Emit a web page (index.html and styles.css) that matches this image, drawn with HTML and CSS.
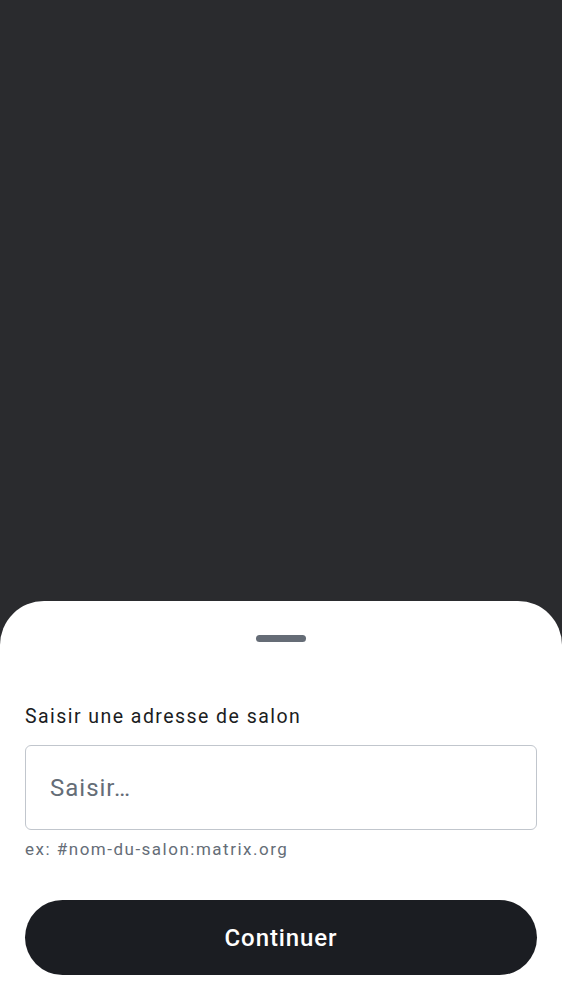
FILE: index.html
```html
<!DOCTYPE html>
<html lang="fr">
<head>
<meta charset="utf-8">
<link rel="stylesheet" href="styles.css">
</head>
<body>
<div class="screen">
  <div class="scrim"></div>
  <div class="sheet">
    <div class="handle"></div>
    <label class="label" for="addr">Saisir une adresse de salon</label>
    <div class="field"><input id="addr" class="input" type="text" placeholder="Saisir…"></div>
    <div class="helper">ex: #nom-du-salon:matrix.org</div>
    <button class="btn" type="button">Continuer</button>
  </div>
</div>
</body>
</html>
```
FILE: styles.css
```css
html, body {
  margin: 0;
  padding: 0;
  background: #2a2b2e;
}
.screen {
  height: 1000px;
  display: flex;
  flex-direction: column;
  font-family: Roboto, "Noto Sans", sans-serif;
}
.scrim {
  flex: 1;
  background: #2a2b2e;
}
.sheet {
  height: 399px;
  box-sizing: border-box;
  background: #ffffff;
  border-radius: 44px 44px 0 0;
  padding: 34px 25px 0;
  display: flex;
  flex-direction: column;
}
.handle {
  align-self: center;
  width: 50px;
  height: 7px;
  border-radius: 4px;
  background: #656c76;
}
.label {
  margin-top: 63px;
  font-size: 19.5px;
  line-height: 24px;
  letter-spacing: 1.45px;
  color: #1b1d22;
}
.field {
  margin-top: 16px;
  height: 85px;
  box-sizing: border-box;
  border: 1.5px solid #c1c6cd;
  border-radius: 6px;
  display: flex;
  align-items: center;
  padding: 0 24px;
}
.input {
  border: none;
  outline: none;
  width: 100%;
  font-family: Roboto, "Noto Sans", sans-serif;
  font-size: 24px;
  letter-spacing: 1px;
  color: #1b1d22;
  background: transparent;
  padding: 0;
}
.input::placeholder {
  color: #656d77;
}
.helper {
  margin-top: 8px;
  font-size: 17px;
  line-height: 22px;
  letter-spacing: 1.5px;
  color: #656d77;
}
.btn {
  margin-top: 40px;
  height: 75px;
  border: none;
  border-radius: 38px;
  background: #1b1d22;
  color: #ffffff;
  font-family: Roboto, "Noto Sans", sans-serif;
  font-size: 24px;
  font-weight: 500;
  letter-spacing: 0.9px;
}
```
